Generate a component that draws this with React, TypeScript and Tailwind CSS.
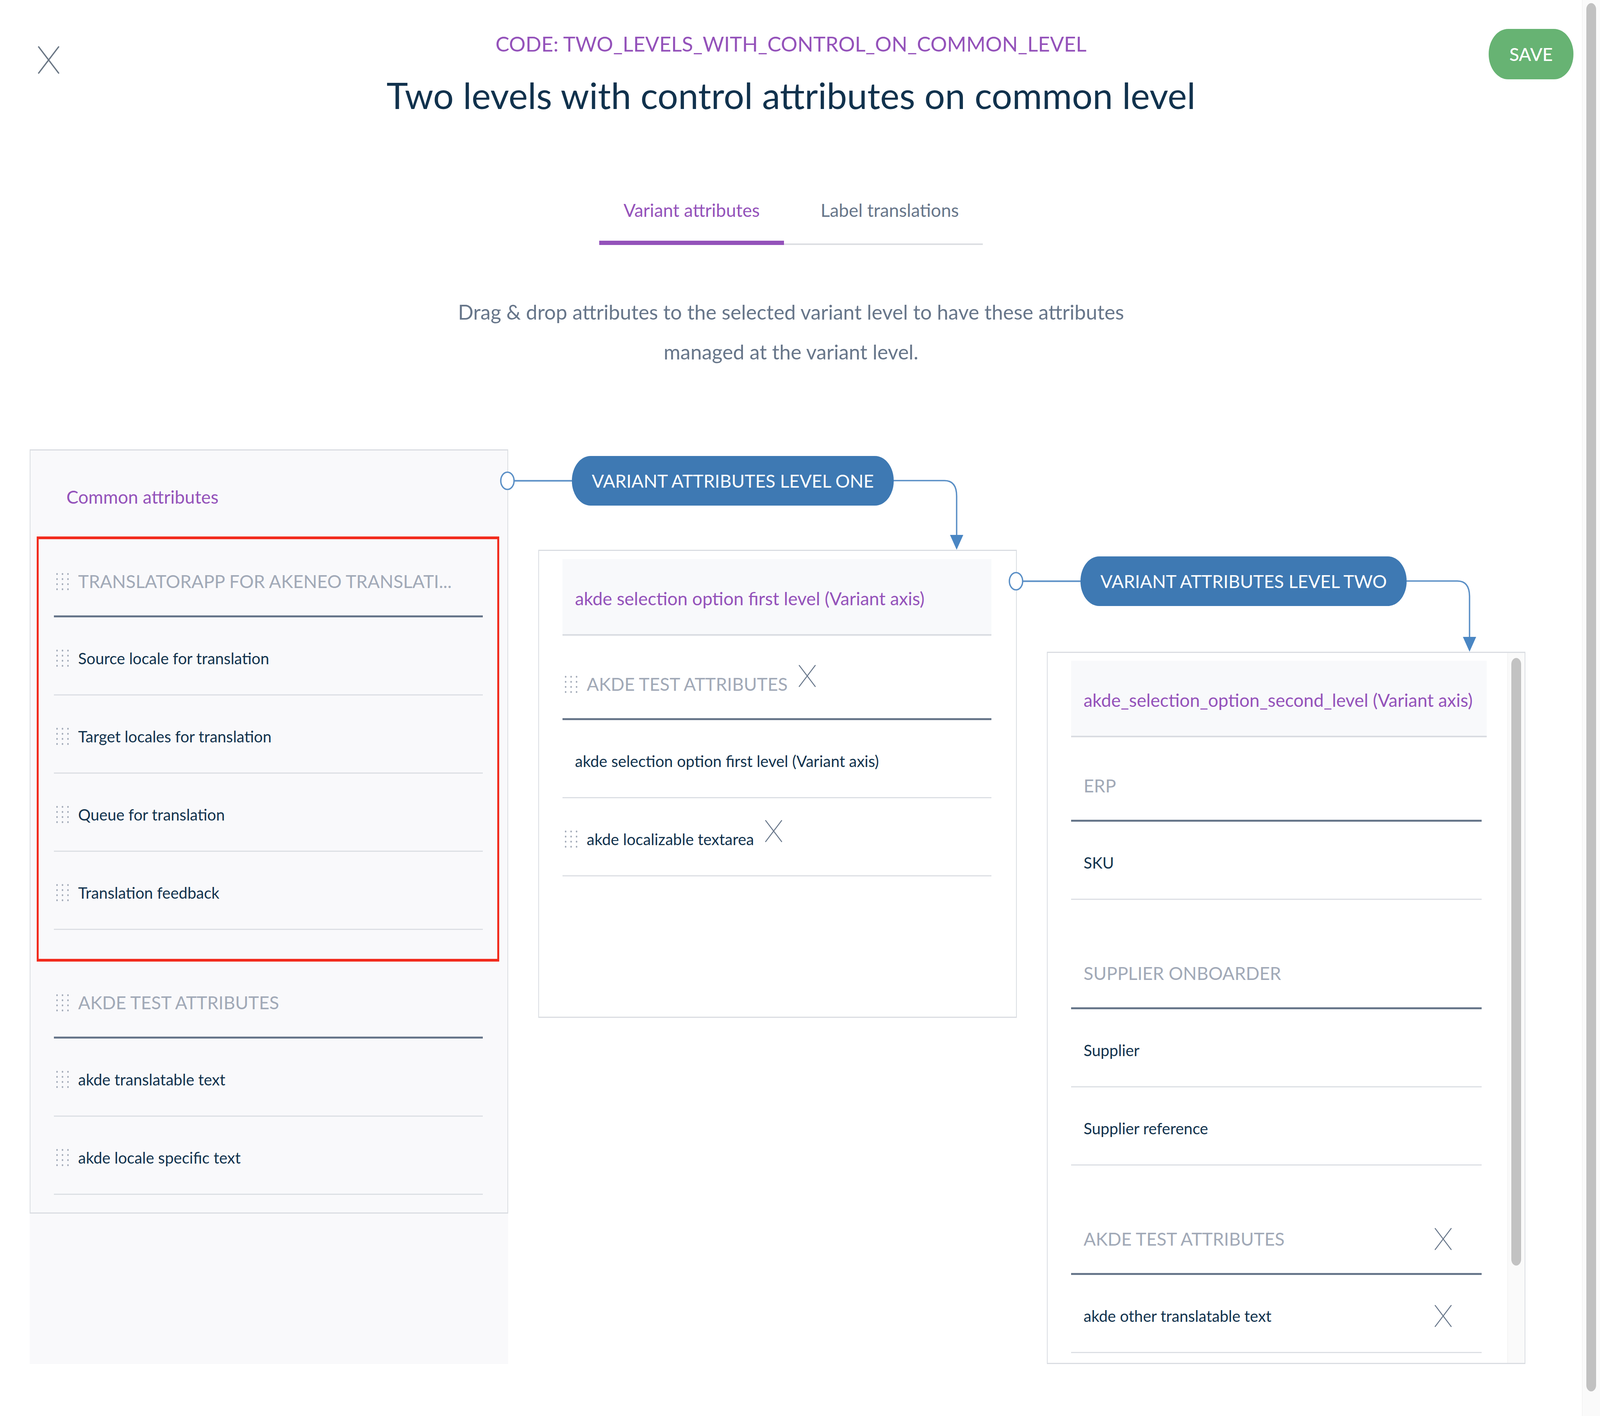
import React from "react";

const purple = "text-[#9452ba]";

function DragHandle() {
  const xs = [3, 17, 31];
  const ys = [5, 18, 31, 44];
  return (
    <svg width="34" height="49" viewBox="0 0 34 49" className="mr-[23px] shrink-0">
      {xs.map((x) =>
        ys.map((y) => <ellipse key={`${x}-${y}`} cx={x} cy={y} rx="2" ry="2.6" fill="#a1a9b7" />)
      )}
    </svg>
  );
}

function Cross({ w, h, stroke, color, className }: { w: number; h: number; stroke: number; color: string; className?: string }) {
  return (
    <svg width={w} height={h} viewBox={`0 0 ${w} ${h}`} className={className}>
      <line x1="2" y1="2" x2={w - 2} y2={h - 2} stroke={color} strokeWidth={stroke} strokeLinecap="round" />
      <line x1={w - 2} y1="2" x2="2" y2={h - 2} stroke={color} strokeWidth={stroke} strokeLinecap="round" />
    </svg>
  );
}

type RemoveKind = "inline" | "right" | undefined;

function RemoveIcon({ kind }: { kind: RemoveKind }) {
  if (!kind) return null;
  if (kind === "inline") return <Cross w={45} h={58} stroke={2.5} color="#67768a" className="mb-[42px] ml-[28px] shrink-0" />;
  return <Cross w={45} h={58} stroke={2.5} color="#67768a" className="ml-auto mr-[76px] shrink-0" />;
}

function GroupHeader({ label, handle, remove }: { label: string; handle?: boolean; remove?: RemoveKind }) {
  return (
    <div
      className={`flex h-[216px] items-center border-b-[5px] border-[#67768a] pt-[37px] ${handle ? "pl-[5px]" : "pl-[32px]"}`}
    >
      {handle && <DragHandle />}
      <span className="whitespace-nowrap text-[46px] leading-[70px] uppercase text-[#a1a9b7]">{label}</span>
      <RemoveIcon kind={remove} />
    </div>
  );
}

function ItemRow({ label, handle, remove }: { label: string; handle?: boolean; remove?: RemoveKind }) {
  return (
    <div
      className={`flex h-[200px] items-center border-b-[3px] border-[#dcdfe4] pt-[12px] ${handle ? "pl-[5px]" : "pl-[32px]"}`}
    >
      {handle && <DragHandle />}
      <span className="whitespace-nowrap text-[40px] leading-[62px] text-[#11324d]">{label}</span>
      <RemoveIcon kind={remove} />
    </div>
  );
}

function AxisRow({ label, className = "" }: { label: string; className?: string }) {
  return (
    <div
      className={`flex h-[196px] items-center border-b-[4px] border-[#d9dce1] bg-[#f8f9fb] pl-[32px] pt-[10px] ${className}`}
    >
      <span className={`whitespace-nowrap text-[46px] leading-[70px] ${purple}`}>{label}</span>
    </div>
  );
}

function LevelHeader({ label, wrapClass, curveHeight }: { label: string; wrapClass: string; curveHeight: number }) {
  const w = 178;
  const h = curveHeight;
  const vx = w - 17;
  return (
    <div className={`-ml-[99px] flex items-start ${wrapClass}`}>
      <svg width="185" height="127" viewBox="0 0 185 127" className="shrink-0">
        <line x1="37" y1="63.5" x2="185" y2="63.5" stroke="#5a8fc6" strokeWidth="4" />
        <ellipse cx="20" cy="63.5" rx="17" ry="22" fill="#ffffff" stroke="#5a8fc6" strokeWidth="3.5" />
      </svg>
      <div className="flex h-[127px] shrink-0 items-center whitespace-nowrap rounded-[48px_/_63px] bg-[#3e79b3] px-[51px] text-[46px] leading-none text-white">
        {label}
      </div>
      <svg width={w} height={h} viewBox={`0 0 ${w} ${h}`} className="mt-[61px] shrink-0">
        <path d={`M0 2 H${vx - 31} Q${vx} 2 ${vx} 42 V${h - 37}`} fill="none" stroke="#5a8fc6" strokeWidth="3.5" />
        <polygon points={`${vx - 17},${h - 38} ${vx + 17},${h - 38} ${vx},${h}`} fill="#4a86c3" />
      </svg>
    </div>
  );
}

export default function App() {
  return (
    <div className="flex min-h-screen w-full overflow-hidden bg-white font-['Lato',sans-serif]">
      <div className="flex min-w-0 flex-1 flex-col">
        {/* Header */}
        <header className="grid grid-cols-[1fr_auto_1fr]">
          <div className="pl-[97px] pt-[118px]">
            <Cross w={55} h={71} stroke={3.5} color="#6b7785" />
          </div>
          <div className="flex flex-col items-center pt-[69px]">
            <div className={`whitespace-nowrap text-[53px] leading-[86px] ${purple}`}>
              CODE: TWO_LEVELS_WITH_CONTROL_ON_COMMON_LEVEL
            </div>
            <h1 className="mt-[17px] whitespace-nowrap text-[93px] leading-[142px] text-[#11324d]">
              Two levels with control attributes on common level
            </h1>
          </div>
          <div className="flex items-start justify-end pr-[22px] pt-[74px]">
            <button className="h-[129px] w-[217px] rounded-[50px_/_64px] bg-[#67b373] text-[46px] font-medium text-white">
              SAVE
            </button>
          </div>
        </header>

        {/* Tabs */}
        <nav className="mt-[190px] flex justify-center">
          <div className="flex items-end">
            <div className={`border-b-[11px] border-[#9452ba] px-[62px] pb-[44px] text-[46px] leading-[68px] ${purple}`}>
              Variant attributes
            </div>
            <div className="border-b-[4px] border-[#dcdee2] pb-[51px] pl-[94px] pr-[61px] text-[46px] leading-[68px] text-[#67768a]">
              Label translations
            </div>
          </div>
        </nav>

        <p className="mt-[120px] text-center text-[52px] leading-[102px] text-[#67768a]">
          Drag &amp; drop attributes to the selected variant level to have these attributes
          <br />
          managed at the variant level.
        </p>

        {/* Columns */}
        <div className="mt-[199px] flex h-[2341px] gap-[77px] pl-[76px]">
          {/* Common attributes */}
          <div className="flex w-[1225px] shrink-0 flex-col bg-[#f9f9fb]">
            <div className="border-x-[2px] border-y-[3px] border-[#dadde2] pb-[45px] pl-[60px] pr-[63px]">
              <div className={`h-[211px] pl-[32px] pt-[82px] text-[46px] leading-[73px] ${purple}`}>Common attributes</div>
              <div className="relative mb-[62px]">
                <div className="pointer-events-none absolute -bottom-[81px] -left-[44px] -right-[42px] top-[9px] border-x-[5px] border-y-[7px] border-[#f22b1d]" />
                <GroupHeader label="TRANSLATORAPP FOR AKENEO TRANSLATI..." handle />
                <ItemRow label="Source locale for translation" handle />
                <ItemRow label="Target locales for translation" handle />
                <ItemRow label="Queue for translation" handle />
                <ItemRow label="Translation feedback" handle />
              </div>
              <div>
                <GroupHeader label="AKDE TEST ATTRIBUTES" handle />
                <ItemRow label="akde translatable text" handle />
                <ItemRow label="akde locale specific text" handle />
              </div>
            </div>
          </div>

          {/* Level one */}
          <div className="flex w-[1225px] shrink-0 flex-col">
            <LevelHeader label="VARIANT ATTRIBUTES LEVEL ONE" wrapClass="h-[257px] pt-[17px]" curveHeight={179} />
            <div className="h-[1198px] border-x-[2px] border-y-[3px] border-[#dadde2] bg-white pl-[60px] pr-[63px] pt-[21px]">
              <AxisRow label="akde selection option first level (Variant axis)" />
              <GroupHeader label="AKDE TEST ATTRIBUTES" handle remove="inline" />
              <ItemRow label="akde selection option first level (Variant axis)" />
              <ItemRow label="akde localizable textarea" handle remove="inline" />
            </div>
          </div>

          {/* Level two */}
          <div className="flex w-[1225px] shrink-0 flex-col">
            <LevelHeader label="VARIANT ATTRIBUTES LEVEL TWO" wrapClass="h-[518px] pt-[274px]" curveHeight={183} />
            <div className="flex h-[1823px] border-x-[2px] border-y-[3px] border-[#dadde2] bg-white">
              <div className="flex-1 overflow-hidden pl-[60px] pr-[66px] pt-[20px]">
                <AxisRow label="akde_selection_option_second_level (Variant axis)" className="-mr-[13px]" />
                <GroupHeader label="ERP" />
                <ItemRow label="SKU" />
                <div className="mt-[64px]">
                  <GroupHeader label="SUPPLIER ONBOARDER" />
                  <ItemRow label="Supplier" />
                  <ItemRow label="Supplier reference" />
                </div>
                <div className="mt-[64px]">
                  <GroupHeader label="AKDE TEST ATTRIBUTES" remove="right" />
                  <ItemRow label="akde other translatable text" remove="right" />
                </div>
              </div>
              <div className="flex w-[44px] shrink-0 justify-center border-l-[1.5px] border-[#ececec] bg-[#fafafa] pt-[13px]">
                <div className="h-[1555px] w-[25px] rounded-[12.5px_/_16px] bg-[#c2c2c2]" />
              </div>
            </div>
          </div>
        </div>
      </div>

      {/* Page scrollbar */}
      <div className="flex w-[46px] shrink-0 justify-center border-l-[1.5px] border-[#ececec] bg-[#fafafa] pt-[8px]">
        <div className="h-[3553px] w-[25px] rounded-[12.5px_/_16px] bg-[#c1c1c1]" />
      </div>
    </div>
  );
}
